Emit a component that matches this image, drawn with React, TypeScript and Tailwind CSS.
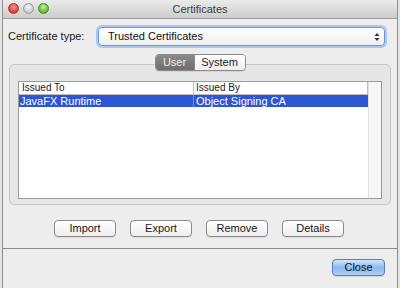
import { ReactNode } from 'react'

const font = "font-['Lucida_Grande','Liberation_Sans',Arial,sans-serif]"

function PushButton({ children }: { children: ReactNode }) {
  return (
    <button className="flex h-[17px] w-[62px] items-center justify-center rounded-[4px] border border-[#8c8c8c] bg-gradient-to-b from-[#ffffff] to-[#eeeeee] text-[11px] leading-none text-[#1a1a1a] shadow-[0_1px_0_rgba(0,0,0,0.08)]">
      {children}
    </button>
  )
}

export default function App() {
  return (
    <div className={`h-[288px] w-[400px] overflow-hidden bg-[#e4e4e4] ${font}`}>
      <div className="ml-[2px] flex h-[288px] w-[396px] flex-col border-x border-[#8f8f8f] bg-[#ededed]">
        {/* title bar */}
        <div className="relative flex h-[19px] items-center justify-center rounded-t-[5px] border-b border-[#9c9c9c] bg-gradient-to-b from-[#ebebeb] to-[#cdcdcd]">
          <div className="absolute left-[5px] top-[3px] flex gap-[4px]">
            <span className="h-[11px] w-[11px] rounded-full border border-[#a8383a] bg-[radial-gradient(circle_at_50%_35%,#ff9a93,#e0443e_60%,#b82a26)]" />
            <span className="h-[11px] w-[11px] rounded-full border border-[#9a9a9a] bg-[radial-gradient(circle_at_50%_35%,#f4f4f4,#cfcfcf_60%,#b0b0b0)]" />
            <span className="h-[11px] w-[11px] rounded-full border border-[#4a8a2a] bg-[radial-gradient(circle_at_50%_35%,#c8f59a,#6cc13a_60%,#3f8d1e)]" />
          </div>
          <span className="text-[11px] leading-none text-[#3c3c3c]">Certificates</span>
        </div>

        {/* certificate type */}
        <div className="mt-[8px] flex items-center pl-[5px] pr-[12px]">
          <span className="w-[90px] text-[11px] leading-none text-[#1a1a1a]">Certificate type:</span>
          <div className="flex h-[19px] flex-1 items-center justify-between rounded-[4px] border border-[#6c9ad6] bg-gradient-to-b from-[#ffffff] to-[#f0f0f0] pl-[9px] pr-[4px] shadow-[0_0_0_2px_#a9c8ef]">
            <span className="text-[11px] leading-none text-[#111]">Trusted Certificates</span>
            <svg width="6" height="10" viewBox="0 0 6 10">
              <path d="M3 1 L5.5 4 L0.5 4 Z M3 9 L5.5 6 L0.5 6 Z" fill="#333" />
            </svg>
          </div>
        </div>

        {/* tabs */}
        <div className="relative z-10 mt-[8px] flex justify-center">
          <div className="flex h-[17px] overflow-hidden rounded-[4px] border border-[#8a8a8a] shadow-[0_1px_0_rgba(0,0,0,0.08)]">
            <span className="flex w-[38px] items-center justify-center bg-gradient-to-b from-[#8a8a8a] to-[#6e6e6e] text-[11px] leading-none text-[#ececec]">
              User
            </span>
            <span className="flex w-[51px] items-center justify-center border-l border-[#8a8a8a] bg-gradient-to-b from-[#ffffff] to-[#efefef] text-[11px] leading-none text-[#1a1a1a]">
              System
            </span>
          </div>
        </div>

        {/* group box */}
        <div className="mx-[6px] mt-[-7px] flex h-[141px] flex-col rounded-[5px] border border-[#c6c6c6] bg-[#e6e6e6] px-[8px] pb-[5px] pt-[16px]">
          <div className="flex flex-1 border border-[#9a9a9a] bg-white">
            <div className="flex flex-1 flex-col">
              <div className="flex h-[13px] border-b border-[#bdbdbd] text-[10px] leading-none text-[#222]">
                <span className="flex w-[175px] items-center border-r border-[#bdbdbd] pl-[3px]">Issued To</span>
                <span className="flex flex-1 items-center border-r border-[#bdbdbd] pl-[2px]">Issued By</span>
              </div>
              <div className="flex h-[12px] bg-[#2e55d2] text-[11px] leading-none text-white">
                <span className="flex w-[175px] items-center border-r border-[#6f8fe6] pl-[1px]">JavaFX Runtime</span>
                <span className="flex flex-1 items-center pl-[2px]">Object Signing CA</span>
              </div>
            </div>
            <div className="w-[13px] border-l border-[#e4e4e4] bg-[#f7f7f7]" />
          </div>
        </div>

        {/* action buttons */}
        <div className="mt-[15px] flex justify-center gap-[14px] pr-[2px]">
          <PushButton>Import</PushButton>
          <PushButton>Export</PushButton>
          <PushButton>Remove</PushButton>
          <PushButton>Details</PushButton>
        </div>

        <div className="mt-[11px] h-px bg-[#8c8c8c]" />

        <div className="mt-[10px] flex justify-end pr-[12px]">
          <button className="flex h-[17px] w-[53px] items-center justify-center rounded-[4px] border border-[#5b7fb8] bg-gradient-to-b from-[#d4e6fb] via-[#8dbaf0] to-[#a9cdf7] text-[11px] leading-none text-[#111] shadow-[0_1px_0_rgba(0,0,0,0.1)]">
            Close
          </button>
        </div>
      </div>
    </div>
  )
}
